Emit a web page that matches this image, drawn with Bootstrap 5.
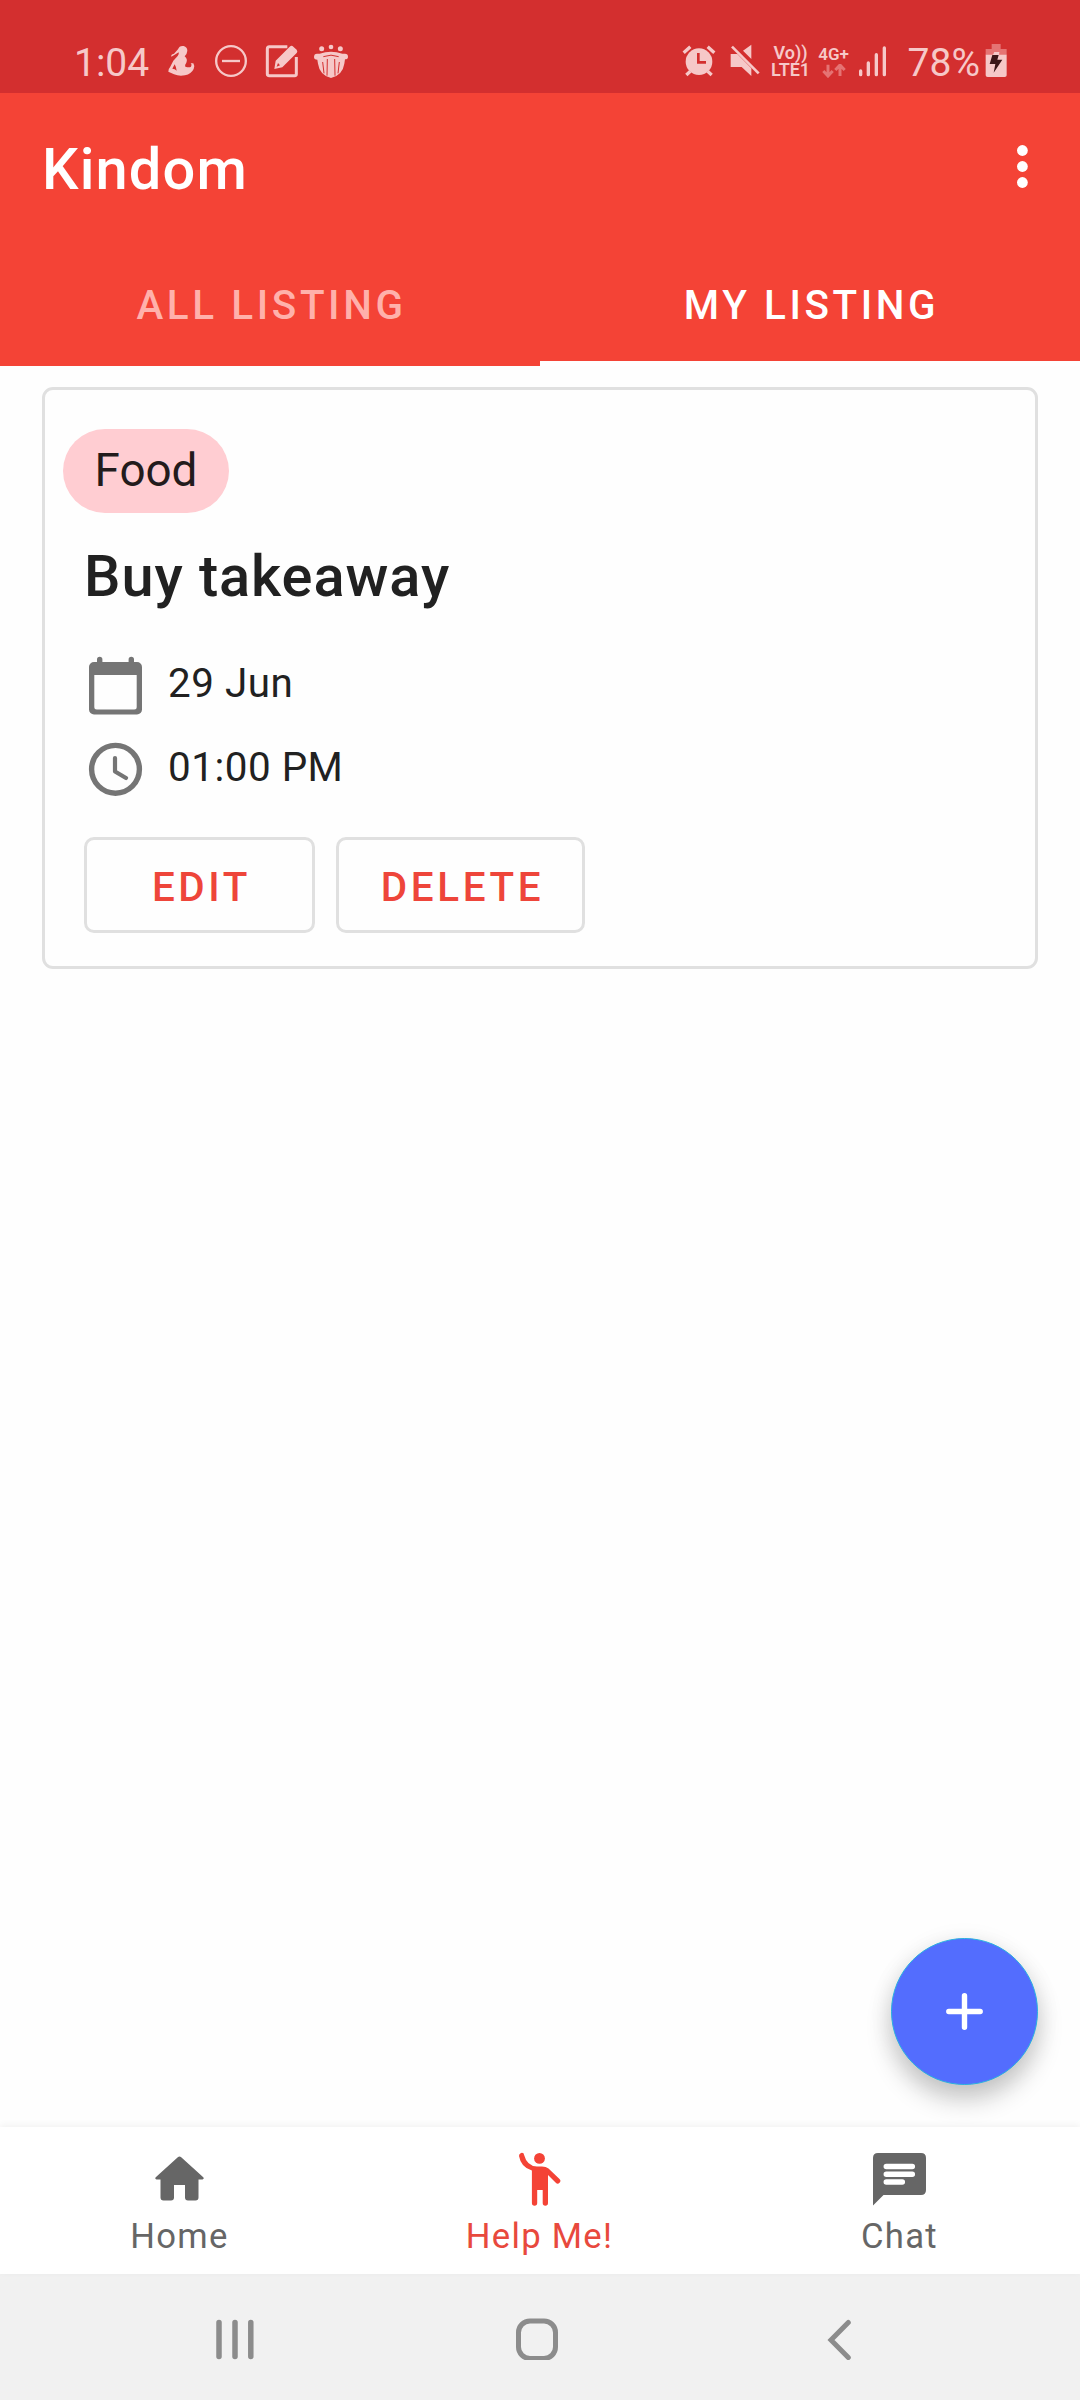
<!DOCTYPE html>
<html lang="en">
<head>
<meta charset="utf-8">
<meta name="viewport" content="width=device-width, initial-scale=1">
<title>Kindom</title>
<link rel="stylesheet" href="https://cdn.jsdelivr.net/npm/bootstrap@5.3.0/dist/css/bootstrap.min.css">
<style>
  body { font-family: Roboto, "Liberation Sans", sans-serif; background: #fefefe; color: #212121; overflow: hidden; }
  svg { display: block; flex: none; }
  .screen { width: 1080px; height: 2400px; }
  .statusbar { height: 93px; background: #d32f2f; color: #f6c8c8; padding: 44px 73px 0 74px; }
  .statusbar svg { height: 36px; }
  .status-text { font-size: 39px; line-height: 38px; white-space: nowrap; }
  .net { font-weight: 600; font-size: 18px; line-height: 17px; white-space: nowrap; }
  .appbar { background: #f44336; color: #fff; }
  .toolbar { height: 147px; padding: 0 42px; }
  .app-title { font-size: 57.75px; font-weight: 500; line-height: 68px; letter-spacing: .02em; padding-top: 4px; }
  .tabs .nav-link { height: 126px; border-radius: 0; padding: 10px 0 0 3px; color: #ffb1ab; font-size: 40.4px; font-weight: 500; letter-spacing: .0893em; line-height: 47px; border-bottom: 5px solid transparent; }
  .tabs .nav-link.active { color: #fff; border-bottom-color: #fff; }
  .listing { margin: 21px 42px 0; border: 3px solid #e0e0e0; border-radius: 11px; background: #fefefe; height: 582px; }
  .listing .card-body { padding: 39px 39px 32px; }
  .chip { width: 166px; height: 84px; margin-left: -21px; background: #ffcdd2; color: #231b1c; font-size: 45.8px; line-height: 54px; }
  .listing h2 { font-size: 57.75px; font-weight: 500; line-height: 68px; letter-spacing: .016em; margin: 29px 0 31px; }
  .info { height: 84px; font-size: 40.4px; letter-spacing: .0125em; gap: 21px; line-height: 47px; }
  .btn-outline { height: 96px; border: 3px solid #e0e0e0; border-radius: 10px; color: #ee453a; font-size: 40.4px; font-weight: 500; letter-spacing: .0893em; line-height: 47px; padding: 4px 0 0 4px; }
  .edit { width: 231px; }
  .delete { width: 249px; }
  .fab { right: 42px; bottom: 42px; width: 147px; height: 147px; background: #536dfe; border: 1px solid #28b0e0; box-shadow: 0 15px 26px rgba(0,0,0,.2), 0 4px 24px rgba(0,0,0,.08); }
  .bottombar { height: 147px; background: #fff; box-shadow: 0 -2px 7px rgba(0,0,0,.05); font-size: 34.65px; letter-spacing: .037em; line-height: 41px; z-index: 2; }
  .bottombar a { color: #666; text-decoration: none; padding: 21px 2px 0 0; }
  .bottombar a.current { color: #e8493d; }
  .bottombar span { margin-top: 5px; padding-left: 1px; }
  .sysbar { height: 126px; background: #f1f1f1; }
</style>
</head>
<body>
<div class="screen d-flex flex-column">

  <div class="statusbar d-flex align-items-start flex-shrink-0">
    <span class="status-text">1:04</span>
    <!-- seated figure -->
    <svg style="margin-left:19px" width="28" viewBox="354 72 84 108" fill="#f6c8c8"><path d="M384 88Q388 76 401 78 412 81 412 92 411 103 404 109 414 117 409 128 404 134 406 140 418 144 423 140 427 134 422 130L430 130Q435 137 431 147 424 162 405 166 388 170 372 163L355 155Q354 148 360 142L370 122 383 108Q388 104 386 97L374 104 364 110Q362 103 372 101ZM374 133L367 146Q375 146 380 152 379 142 374 133Z"/></svg>
    <svg style="margin-left:18px" width="34" viewBox="492 72 102 108" fill="none" stroke="#f6c8c8" stroke-width="7"><circle cx="543" cy="123" r="44.500"/><path d="M516 123h54"/></svg>
    <!-- compose -->
    <svg style="margin-left:17px" width="34" viewBox="645 72 102 108" fill="none" stroke="#f6c8c8"><path d="M712 80H658q-6 0-6 6v76q0 5 6 5h76q5 0 5-5V111" stroke-width="9"/><path fill="#f6c8c8" stroke="none" d="M673 147l4-25 42-42q6-5 11 0l10 9q4 5 0 10l-43 43ZM680 140l10-4-6-7Z" fill-rule="evenodd"/></svg>
    <!-- people crest -->
    <svg style="margin-left:14px" width="36" viewBox="789 72 108 108" fill="#f6c8c8"><circle cx="815" cy="86" r="7.500"/><circle cx="843" cy="81" r="7"/><circle cx="871" cy="86" r="7.500"/><path d="M792 111q0-10 9-10h8q34-12 68 0h8q9 0 9 9 0 8-9 8l-2 13q-5 34-40 43-34-9-39-43l-2-12q-10 0-10-8Z"/><path d="M820 110q23-9 46 0M818 126l4 34M832 117l-1 50M854 117l1 50M868 126l-4 34" fill="none" stroke="#d32f2f" stroke-width="3"/></svg>

    <svg style="margin-left:auto" width="34" viewBox="63 72 102 108" fill="none" stroke="#f6c8c8"><circle cx="114" cy="125" r="40" fill="#f6c8c8" stroke="none"/><path stroke-width="10" d="M68 98l20-18M140 80l20 18M88 154l-12 11M140 154l12 11"/><path d="M112 99v28h23" stroke="#d32f2f" stroke-width="8"/></svg>
    <svg style="margin-left:13px" width="32" viewBox="204 72 96 108" fill="#f6c8c8"><path d="M209 102h20l42 43v23l-29-27h-33ZM246 92l25-18v43Z"/><path d="M213 80l80 80" stroke="#f6c8c8" stroke-width="8"/></svg>
    <div class="net d-flex flex-column align-items-center" style="margin-left:10px;width:40px"><span>Vo))</span><span>LTE1</span></div>
    <div class="d-flex flex-column align-items-center" style="margin-left:7px;width:32px">
      <span class="net" style="font-size:17px;line-height:20px">4G+</span>
      <svg width="24" style="height:14px" viewBox="482 134 72 42" fill="none" stroke="#e57373" stroke-width="9"><path d="M500 136v33M486 155l14 15 14-15M536 170v-31M522 152l14-15 14 15"/></svg>
    </div>
    <svg style="margin-left:8px" width="29" viewBox="594 72 87 108" stroke="#f6c8c8" stroke-width="10" stroke-linecap="round"><path d="M602 153v11M625 129v35M649 104v60M673 84v80"/></svg>
    <span class="status-text" style="margin-left:21px">78%</span>
    <svg style="margin-left:5px" width="22" viewBox="976 72 66 108"><path d="M996 72h27v15h18v18h-63V87h18Z" fill="#e57373"/><path d="M978 104h22l4-8h15l-1 8h23v62q0 5-6 5h-51q-6 0-6-5Z" fill="#f6c8c8"/><path d="M998 105h19l-4 14h15l-26 39 5-26h-17Z" fill="#3c1618"/></svg>
  </div>

  <header class="appbar flex-shrink-0">
    <div class="toolbar d-flex align-items-center justify-content-between">
      <div class="app-title">Kindom</div>
      <svg width="32" height="63" viewBox="0 0 32 63" fill="#fff"><circle cx="16.400" cy="15.500" r="5.400"/><circle cx="16.400" cy="31.500" r="5.400"/><circle cx="16.400" cy="47.500" r="5.400"/></svg>
    </div>
    <nav class="tabs nav nav-fill flex-nowrap">
      <a class="nav-link w-50 d-flex align-items-center justify-content-center" href="#">ALL LISTING</a>
      <a class="nav-link w-50 d-flex align-items-center justify-content-center active" href="#">MY LISTING</a>
    </nav>
  </header>

  <main class="flex-grow-1 position-relative">
    <div class="card listing">
      <div class="card-body">
        <div class="chip rounded-pill d-flex align-items-center justify-content-center">Food</div>
        <h2>Buy takeaway</h2>
        <div class="info d-flex align-items-center">
          <svg width="63" height="84" viewBox="0 0 63 84" fill="#757575"><path fill-rule="evenodd" d="M10 21h3v-2.500a2.700 2.700 0 0 1 5.400 0V21h26.200v-2.500a2.700 2.700 0 0 1 5.400 0V21h3a5 5 0 0 1 5 5v42.500a5 5 0 0 1-5 5H10a5 5 0 0 1-5-5V26a5 5 0 0 1 5-5ZM10.300 34v32q0 2.500 2.500 2.500h37.400q2.500 0 2.500-2.500V34Z"/></svg>
          <span>29 Jun</span>
        </div>
        <div class="info d-flex align-items-center">
          <svg width="63" height="84" viewBox="0 0 63 84" fill="none" stroke="#757575"><circle cx="31.500" cy="44.300" r="23.900" stroke-width="5.400"/><path d="M31 33v13.500l11 6.500" stroke-width="4.200" stroke-linecap="round" stroke-linejoin="round"/></svg>
          <span>01:00 PM</span>
        </div>
        <div class="d-flex" style="gap:21px;margin-top:28px">
          <button class="btn btn-outline edit">EDIT</button>
          <button class="btn btn-outline delete">DELETE</button>
        </div>
      </div>
    </div>
    <button class="btn fab rounded-circle position-absolute p-0 d-flex align-items-center justify-content-center" aria-label="Add">
      <svg width="63" height="63" viewBox="0 0 63 63" stroke="#fff" stroke-width="5.400" stroke-linecap="round"><path d="M31.500 15.800v31.400M15.800 31.500h31.400"/></svg>
    </button>
  </main>

  <nav class="bottombar d-flex flex-shrink-0 position-relative">
    <a class="d-flex flex-column align-items-center col-4" href="#">
      <svg width="63" height="63" viewBox="0 0 63 63" fill="#666"><path d="M26 49.500V37h11v12.500q0 3 3 3h7.500q3 0 3-3V31.500h4q2.200-.5.500-2.400L33.200 9.300q-1.700-1.400-3.400 0L8 29.100q-1.700 1.900.5 2.400h4v18q0 3 3 3H23q3 0 3-3Z"/></svg>
      <span>Home</span>
    </a>
    <a class="current d-flex flex-column align-items-center col-4" href="#">
      <svg width="63" height="63" viewBox="0 0 63 63" fill="#f44336"><circle cx="31.500" cy="10.400" r="5.400"/><path d="M13 5a2.600 2.600 0 0 1 3.200 2.200Q19 18 29 18.500h5q4 0 6.500 2L51.500 31a2.650 2.650 0 0 1-3.700 3.800L40 27v28a2.650 2.650 0 0 1-5.300 0V42h-5.500v13a2.650 2.650 0 0 1-5.300 0V22.500Q13 19.500 11 8q-.1-2.200 2-3Z"/></svg>
      <span>Help Me!</span>
    </a>
    <a class="d-flex flex-column align-items-center col-4" href="#">
      <svg width="63" height="63" viewBox="0 0 63 63"><path d="M10 5h43q5 0 5 5v32q0 5-5 5H15.500L5 57.500V10q0-5 5-5Z" fill="#666"/><path d="M18.300 18.500h26M18.300 26.300h26M18.300 34.100h16" stroke="#fff" stroke-width="5.500" stroke-linecap="round"/></svg>
      <span>Chat</span>
    </a>
  </nav>

  <div class="sysbar d-flex align-items-center flex-shrink-0" style="padding-left:214px">
    <svg width="42" height="46" viewBox="0 0 42 46" stroke="#8c8c8c" stroke-width="5.500" stroke-linecap="round"><path d="M5 8.500v34M21 8.500v34M36.800 8.500v34"/></svg>
    <svg style="margin-left:258px" width="46" height="46" viewBox="0 0 46 46" fill="none" stroke="#8c8c8c" stroke-width="5"><rect x="4.500" y="7" width="37" height="37.500" rx="11.500"/></svg>
    <svg style="margin-left:266px" width="28" height="46" viewBox="0 0 28 46" fill="none" stroke="#8c8c8c" stroke-width="5" stroke-linecap="round"><path d="M22.300 8.500L5 26l17.300 17.500"/></svg>
  </div>
</div>
<script src="https://cdn.jsdelivr.net/npm/bootstrap@5.3.0/dist/js/bootstrap.bundle.min.js"></script>
</body>
</html>
